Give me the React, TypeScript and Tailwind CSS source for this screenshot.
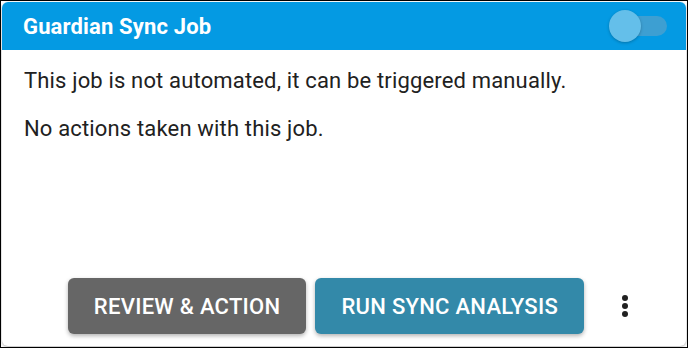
export default function App() {
  return (
    <div className="w-[688px] h-[348px] border border-black bg-white p-px" style={{ fontFamily: "Roboto, 'Liberation Sans', sans-serif" }}>
      <div className="h-full flex flex-col rounded-md bg-white shadow-[0_1px_3px_rgba(0,0,0,0.3)] overflow-hidden">
        {/* header */}
        <div className="h-[48px] shrink-0 bg-[#049ae3] flex items-center justify-between pl-[21px] pr-[19px]">
          <h2 className="text-[22px] font-bold tracking-[0.15px] text-white">Guardian Sync Job</h2>
          <div className="relative w-[58px] h-[32px] flex items-center">
            <div className="ml-[12px] w-[46px] h-[20px] rounded-full bg-[#3d9fd2]" />
            <div className="absolute left-0 top-0 w-[32px] h-[32px] rounded-full bg-[#64bfea] shadow-[0_1px_3px_rgba(0,0,0,0.25)]" />
          </div>
        </div>

        {/* body */}
        <div className="flex-1 px-[22px] pt-[15px] text-[22px] tracking-[0.16px] text-[#212121]">
          <p className="leading-[32px]">This job is not automated, it can be triggered manually.</p>
          <p className="mt-[16px] leading-[32px]">No actions taken with this job.</p>
        </div>

        {/* actions */}
        <div className="flex items-center justify-end gap-[9px] pr-[46px] pb-[12px]">
          <button className="h-[56px] px-[26px] rounded-md bg-[#666666] text-white text-[22px] font-medium uppercase tracking-[0.28px] shadow-[0_2px_4px_rgba(0,0,0,0.3)]">
            Review &amp; Action
          </button>
          <button className="h-[56px] px-[26px] rounded-md bg-[#3389a9] text-white text-[22px] font-medium uppercase tracking-[0.28px] shadow-[0_2px_4px_rgba(0,0,0,0.3)]">
            Run Sync Analysis
          </button>
          <div className="w-[30px] ml-[17px] flex flex-col items-center gap-[2px]">
            <span className="w-[6px] h-[6px] rounded-full bg-[#212121]" />
            <span className="w-[6px] h-[6px] rounded-full bg-[#212121]" />
            <span className="w-[6px] h-[6px] rounded-full bg-[#212121]" />
          </div>
        </div>
      </div>
    </div>
  );
}
